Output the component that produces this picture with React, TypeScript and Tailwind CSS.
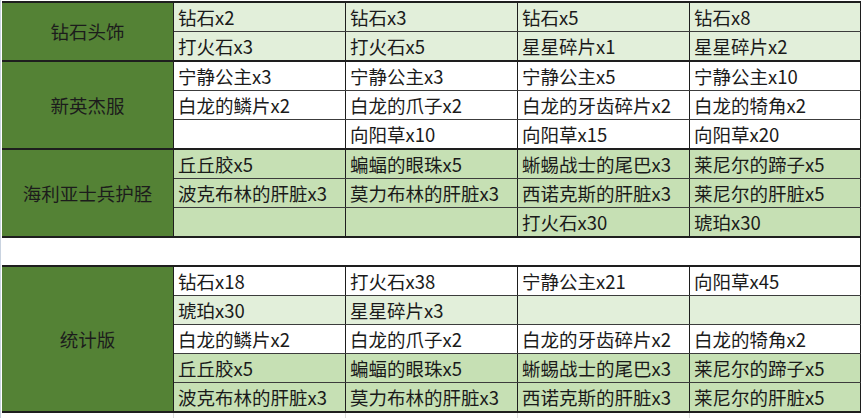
import React from "react";

type Row = { bg: string; cells: string[] };
type Block = { label: string; rows: Row[] };

const L1 = "bg-[#e2efda]";
const L2 = "bg-[#c6e0b4]";
const W = "bg-white";

const blocks: Block[] = [
  {
    label: "钻石头饰",
    rows: [
      { bg: L1, cells: ["钻石x2", "钻石x3", "钻石x5", "钻石x8"] },
      { bg: L1, cells: ["打火石x3", "打火石x5", "星星碎片x1", "星星碎片x2"] },
    ],
  },
  {
    label: "新英杰服",
    rows: [
      { bg: W, cells: ["宁静公主x3", "宁静公主x3", "宁静公主x5", "宁静公主x10"] },
      { bg: W, cells: ["白龙的鳞片x2", "白龙的爪子x2", "白龙的牙齿碎片x2", "白龙的犄角x2"] },
      { bg: W, cells: ["", "向阳草x10", "向阳草x15", "向阳草x20"] },
    ],
  },
  {
    label: "海利亚士兵护胫",
    rows: [
      { bg: L2, cells: ["丘丘胶x5", "蝙蝠的眼珠x5", "蜥蜴战士的尾巴x3", "莱尼尔的蹄子x5"] },
      { bg: L2, cells: ["波克布林的肝脏x3", "莫力布林的肝脏x3", "西诺克斯的肝脏x3", "莱尼尔的肝脏x5"] },
      { bg: L2, cells: ["", "", "打火石x30", "琥珀x30"] },
    ],
  },
];

const total: Block = {
  label: "统计版",
  rows: [
    { bg: W, cells: ["钻石x18", "打火石x38", "宁静公主x21", "向阳草x45"] },
    { bg: L1, cells: ["琥珀x30", "星星碎片x3", "", ""] },
    { bg: W, cells: ["白龙的鳞片x2", "白龙的爪子x2", "白龙的牙齿碎片x2", "白龙的犄角x2"] },
    { bg: L2, cells: ["丘丘胶x5", "蝙蝠的眼珠x5", "蜥蜴战士的尾巴x3", "莱尼尔的蹄子x5"] },
    { bg: L2, cells: ["波克布林的肝脏x3", "莫力布林的肝脏x3", "西诺克斯的肝脏x3", "莱尼尔的肝脏x5"] },
  ],
};

function BlockView({ block, top }: { block: Block; top?: boolean }) {
  return (
    <div className={`flex border-b-2 border-[#1e1e1e] ${top ? "border-t-2" : ""}`}>
      <div className="w-[172px] shrink-0 bg-[#548235] border-r border-[#1e1e1e] flex items-center justify-center text-[#1c1c1c]">
        {block.label}
      </div>
      <div className="flex flex-col">
        {block.rows.map((r, i) => {
          const last = i === block.rows.length - 1;
          return (
            <div
              key={i}
              className={`flex ${last ? "h-[28px]" : "h-[29px] border-b border-[#3c3c3c]"}`}
            >
              {r.cells.map((c, j) => (
                <div
                  key={j}
                  className={`${r.bg} ${j === 3 ? "w-[171px]" : "w-[172px]"} h-full border-r border-[#1e1e1e] pl-[4px] flex items-center whitespace-nowrap overflow-hidden`}
                >
                  {c}
                </div>
              ))}
            </div>
          );
        })}
      </div>
    </div>
  );
}

export default function App() {
  return (
    <div
      className="w-[862px] h-[418px] bg-white overflow-hidden text-[18.5px] text-[#1a1a1a] leading-none"
      style={{ fontFamily: '"Noto Sans CJK SC", "Noto Sans", sans-serif' }}
    >
      <div className="pt-[1px] pl-[1px] border-l border-[#c9d3e0] w-[862px]">
        <div className="w-[859px]">
          <BlockView block={blocks[0]} top />
          <BlockView block={blocks[1]} />
          <BlockView block={blocks[2]} />
          <div className="h-[27px] bg-white border-r border-[#1e1e1e]" />
          <BlockView block={total} top />
          <div className="flex h-[10px]">
            <div className="w-[172px] border-r border-[#dcdcdc]" />
            <div className="w-[172px] border-r border-[#dcdcdc]" />
            <div className="w-[172px] border-r border-[#dcdcdc]" />
            <div className="w-[172px] border-r border-[#dcdcdc]" />
          </div>
        </div>
      </div>
    </div>
  );
}
